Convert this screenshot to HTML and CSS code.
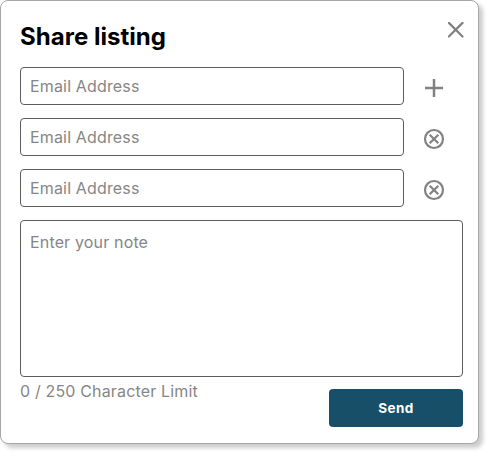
FILE: index.html
```html
<!DOCTYPE html>
<html lang="en">
<head>
<meta charset="utf-8">
<title>Share listing</title>
<link rel="stylesheet" href="styles.css">
</head>
<body>
<form class="modal">
  <header class="header">
    <h1 class="title">Share listing</h1>
    <svg class="close" width="16" height="16" viewBox="0 0 16 16"><path d="M.9.9l13.600 13.600M14.500.9L.9 14.500"/></svg>
  </header>
  <div class="rows">
    <div class="row">
      <div class="field">Email Address</div>
      <svg class="icon plus" width="22" height="22" viewBox="0 0 22 22"><path d="M11 2v18M2 11h18"/></svg>
    </div>
    <div class="row">
      <div class="field">Email Address</div>
      <svg class="icon" width="22" height="22" viewBox="0 0 22 22"><circle cx="11" cy="11" r="9"/><path d="M6.700 6.700l8.600 8.600M15.300 6.700l-8.600 8.600"/></svg>
    </div>
    <div class="row">
      <div class="field">Email Address</div>
      <svg class="icon" width="22" height="22" viewBox="0 0 22 22"><circle cx="11" cy="11" r="9"/><path d="M6.700 6.700l8.600 8.600M15.300 6.700l-8.600 8.600"/></svg>
    </div>
  </div>
  <div class="note">Enter your note</div>
  <footer class="footer">
    <span class="limit">0 / 250 Character Limit</span>
    <button class="send" type="button">Send</button>
  </footer>
</form>
</body>
</html>
```
FILE: styles.css
```css
* { box-sizing: border-box; }
html, body { height: 452px; overflow: hidden; }
body { margin: 0; background: #fff; font-family: Inter, sans-serif; }
.modal { width: 479px; height: 444px; padding: 20px 15px 0 19px; border: 1px solid #a6a6a6; border-radius: 8px; background: #fff; box-shadow: 4px 4px 4px rgba(0,0,0,.2); }
.header { display: flex; justify-content: space-between; height: 46px; }
.title { margin: 1px 0 0; font-size: 24px; line-height: 30px; font-weight: 700; letter-spacing: .03px; }
.close { margin-right: -1px; margin-top: 1px; }
.close, .icon { fill: none; stroke: #828282; stroke-width: 2.2; }
.close { stroke-linecap: round; }
.plus { stroke-width: 2.5; }
.rows { display: flex; flex-direction: column; gap: 13px; }
.row { display: flex; align-items: center; gap: 19px; }
.icon { position: relative; top: 2px; }
.field { width: 384px; height: 38px; padding: 0 9px; border: 1px solid #5c5c5e; border-radius: 4px; line-height: 36px; }
.field, .note, .limit { font-size: 16px; letter-spacing: .16px; color: #868686; }
.note { width: 443px; height: 157px; margin-top: 13px; padding: 11px 9px; border: 1px solid #5c5c5e; border-radius: 4px; line-height: 20px; }
.footer { display: flex; justify-content: space-between; width: 443px; }
.limit { margin-top: 4px; line-height: 20px; }
.send { width: 134px; height: 38px; margin-top: 12px; padding: 0; border: 0; border-radius: 4px; background: #174f69; color: #fff; font: 700 13.500px/38px Inter, sans-serif; letter-spacing: .4px; }
```
